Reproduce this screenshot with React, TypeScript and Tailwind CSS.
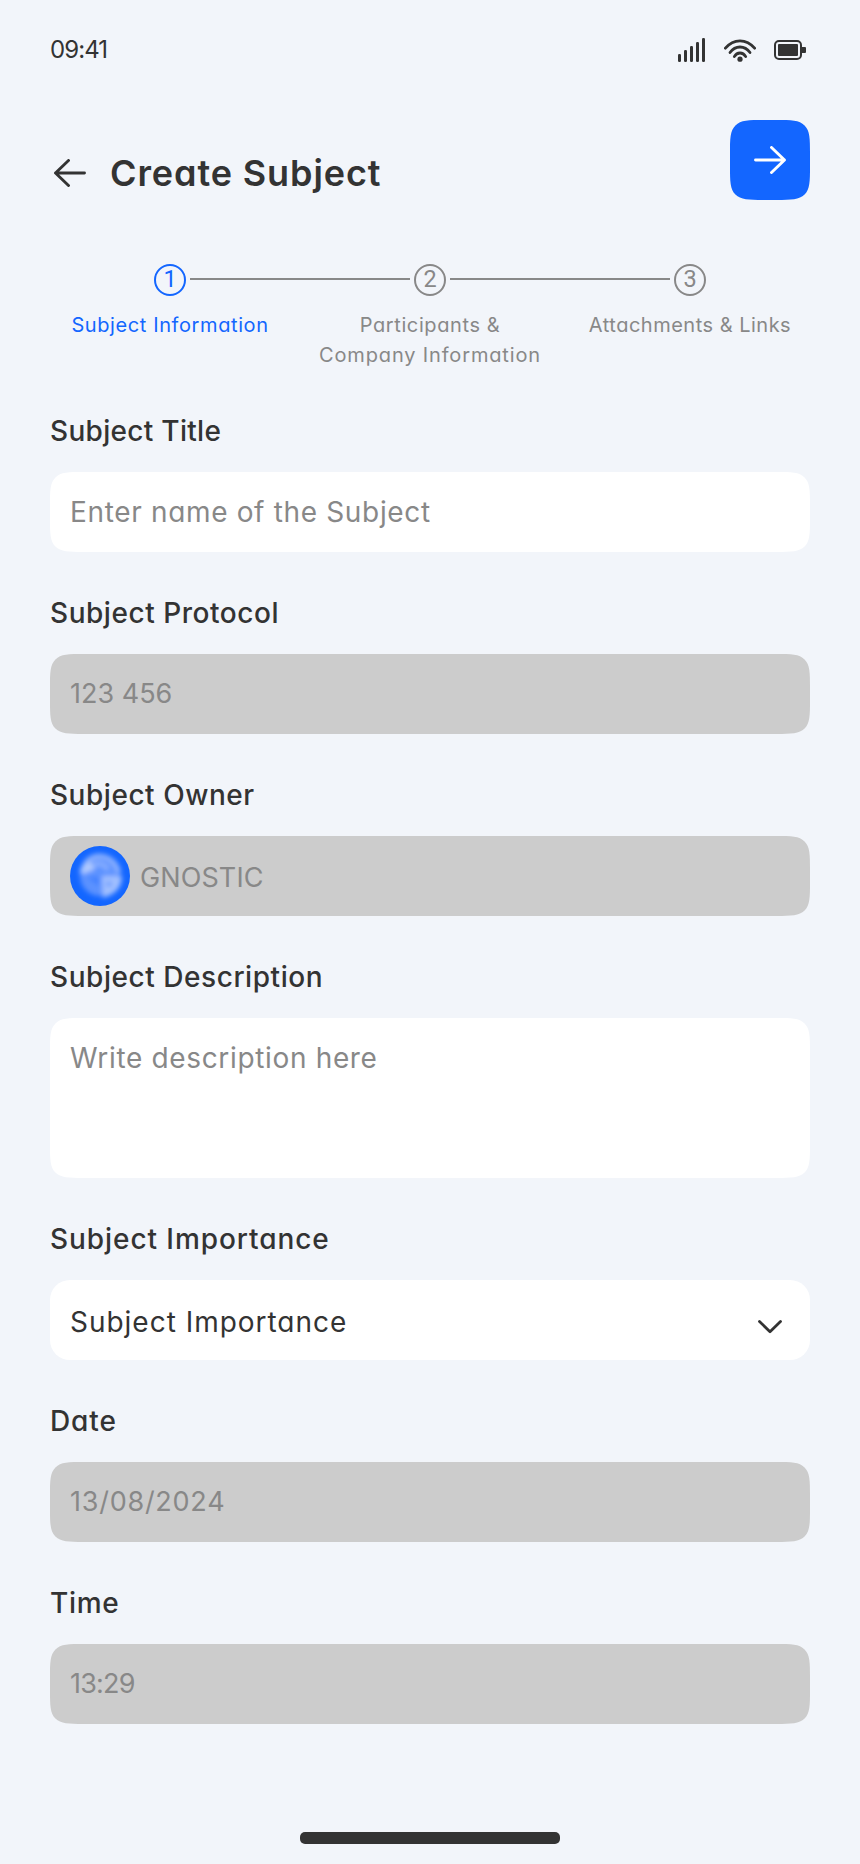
import type { ReactNode } from 'react';

function SignalIcon() {
  return (
    <svg width="28" height="24" viewBox="0 0 28 24" fill="#333333">
      <rect x="0" y="16" width="3" height="8" rx="1.2" />
      <rect x="6" y="12" width="3" height="12" rx="1.2" />
      <rect x="12" y="8" width="3" height="16" rx="1.2" />
      <rect x="18" y="4" width="3" height="20" rx="1.2" />
      <rect x="24" y="0" width="3" height="24" rx="1.2" />
    </svg>
  );
}

function WifiIcon() {
  return (
    <svg width="32" height="24" viewBox="0 0 32 24" fill="none" stroke="#333333" strokeWidth="2.8" strokeLinecap="round">
      <path d="M1.4 10.2C5.2 5.600 10.300 2.800 16 2.800s10.800 2.800 14.600 7.400" />
      <path d="M6 14.500c2.500-3.400 6-5.500 10-5.500s7.500 2.100 10 5.500" />
      <path d="M10.300 18.600c1.300-2.200 3.300-3.600 5.700-3.600s4.400 1.400 5.700 3.600" />
      <circle cx="16" cy="21.200" r="2.600" fill="#333333" stroke="none" />
    </svg>
  );
}

function BatteryIcon() {
  return (
    <svg width="32" height="20" viewBox="0 0 32 20">
      <rect x="1" y="1" width="26" height="18" rx="4" fill="none" stroke="#333333" strokeWidth="2" />
      <rect x="4" y="4" width="20" height="12" rx="1" fill="#333333" />
      <path d="M28 7h3a1 1 0 0 1 1 1v4a1 1 0 0 1-1 1h-3z" fill="#333333" />
    </svg>
  );
}

function ArrowIcon({ className }: { className: string }) {
  return (
    <svg width="32" height="28" viewBox="0 0 32 28" fill="none" stroke="currentColor" strokeWidth="2.900" strokeLinecap="round" strokeLinejoin="round" className={className}>
      <path d="M1.500 14H30.400M17.500 1.500 30.500 14 17.500 26.500" />
    </svg>
  );
}

function OwnerAvatar() {
  return (
    <svg width="60" height="60" viewBox="0 0 60 60" className="shrink-0">
      <defs>
        <filter id="soft" x="-30%" y="-30%" width="160%" height="160%">
          <feGaussianBlur stdDeviation="2.500" />
        </filter>
        <clipPath id="disc">
          <circle cx="30" cy="30" r="30" />
        </clipPath>
      </defs>
      <g clipPath="url(#disc)">
        <rect width="60" height="60" fill="#1366ff" />
        <g filter="url(#soft)">
          <circle cx="30" cy="30" r="20" fill="#5b92ff" />
          <path d="M13 24C17 5 44 5 49 27" fill="none" stroke="#8db2ff" strokeWidth="5" />
          <path d="M18 25c5-9 15-10 20-1" fill="none" stroke="#8db2ff" strokeWidth="4" />
          <path d="M9 25 19 15l6 8-12 5z" fill="#b0caff" />
          <path d="M17 31h12v9z" fill="#3f80ff" />
          <path d="M32 30h20c0 11-6 18-19 22z" fill="#a0bfff" />
          <circle cx="39" cy="38" r="2.500" fill="#5b92ff" />
        </g>
      </g>
    </svg>
  );
}

function Step({ number, active, children }: { number: number; active?: boolean; children: ReactNode }) {
  return (
    <div className={`flex w-[260px] flex-col items-center ${active ? 'text-[#1366ff]' : 'text-[#888888]'}`}>
      <span className="flex size-8 items-center justify-center rounded-full border-2 border-current font-['Roboto',sans-serif] text-[23.5px] leading-none">
        {number}
      </span>
      <span className="mt-3.5 text-center text-[20px] leading-[30px] whitespace-nowrap">{children}</span>
    </div>
  );
}

function Field({ label, labelClass, className, children }: { label: string; labelClass: string; className: string; children: ReactNode }) {
  return (
    <section className="flex flex-col gap-5">
      <h2 className={`pt-px text-[28px] leading-[42px] font-medium ${labelClass}`}>{label}</h2>
      <div className={`flex px-5 text-[28px] leading-[42px] ${className}`}>{children}</div>
    </section>
  );
}

export default function App() {
  return (
    <main className="flex h-[1864px] w-[860px] flex-col bg-[#f2f5fa] font-['Inter','Open_Sans',sans-serif] text-[#333333] [font-feature-settings:'cv11']">
      <header className="flex h-[100px] items-center justify-between pr-[54px] pl-[50px]">
        <span className="pb-px text-[24px] leading-9 tracking-[-0.9px]">09:41</span>
        <div className="flex items-center">
          <SignalIcon />
          <span className="ml-[18px] pb-px"><WifiIcon /></span>
          <span className="ml-[18px]"><BatteryIcon /></span>
        </div>
      </header>

      <div className="mt-5 flex h-20 justify-between pr-[50px] pl-[54px]">
        <div className="flex items-center gap-6 pt-[26px]">
          <ArrowIcon className="rotate-180" />
          <h1 className="text-[36px] leading-[54px] font-semibold tracking-[0.9px]">Create Subject</h1>
        </div>
        <button className="flex size-20 items-center justify-center rounded-[34px] bg-[#1366ff] text-white [corner-shape:squircle]">
          <ArrowIcon className="" />
        </button>
      </div>

      <nav className="relative mx-10 mt-16 flex h-[106px]">
        <Step number={1} active><span className="tracking-[0.6px]">Subject Information</span></Step>
        <Step number={2}>
          <span className="tracking-[0.6px]">Participants &amp;</span>
          <br />
          <span className="tracking-[0.85px]">Company Information</span>
        </Step>
        <Step number={3}><span className="tracking-[0.5px]">Attachments &amp; Links</span></Step>
        <span className="absolute top-3.5 left-[150px] h-0.5 w-[220px] bg-[#888888]" />
        <span className="absolute top-3.5 left-[410px] h-0.5 w-[220px] bg-[#888888]" />
      </nav>

      <div className="mt-[39px] flex flex-col gap-[39px] px-[50px]">
        <Field label="Subject Title" labelClass="tracking-[0.3px]" className="h-20 items-center rounded-[34px] bg-white pb-px text-[#888888] [corner-shape:squircle]">
          <span className="tracking-[0.66px]">Enter name of the Subject</span>
        </Field>
        <Field label="Subject Protocol" labelClass="tracking-[0.54px]" className="h-20 items-center rounded-[34px] bg-[#cccccc] text-[#888888] [corner-shape:squircle]">
          <span className="text-[27px]">123 456</span>
        </Field>
        <Field label="Subject Owner" labelClass="tracking-[0.53px]" className="h-20 items-center gap-2.5 rounded-[34px] bg-[#cccccc] text-[#888888] [corner-shape:squircle]">
          <OwnerAvatar />
          <span className="pt-1 text-[27px] tracking-[0.1px]">GNOSTIC</span>
        </Field>
        <Field label="Subject Description" labelClass="tracking-[0.55px]" className="h-40 items-start rounded-[34px] bg-white pt-[19px] text-[#888888] [corner-shape:squircle]">
          <span className="tracking-[0.66px]">Write description here</span>
        </Field>
        <Field label="Subject Importance" labelClass="tracking-[0.93px]" className="h-20 items-center justify-between rounded-[20px] bg-white">
          <span className="pt-[3px] tracking-[0.98px]">Subject Importance</span>
          <svg width="24" height="14" viewBox="0 0 24 14" fill="none" stroke="#333333" strokeWidth="2.800" strokeLinecap="round" strokeLinejoin="round" className="mt-[13px] mr-2">
            <path d="M1.500 1.500 12 11.700 22.500 1.500" />
          </svg>
        </Field>
        <Field label="Date" labelClass="tracking-[0.9px]" className="h-20 items-center rounded-[34px] bg-[#cccccc] text-[#888888] [corner-shape:squircle]">
          <span className="text-[27px] tracking-[0.75px]">13/08/2024</span>
        </Field>
        <Field label="Time" labelClass="tracking-[0.7px]" className="h-20 items-center rounded-[34px] bg-[#cccccc] text-[#888888] [corner-shape:squircle]">
          <span className="text-[27px] tracking-[-0.8px]">13:29</span>
        </Field>
      </div>

      <footer className="mt-auto flex justify-center pb-5">
        <span className="h-3 w-[260px] rounded-[5px] bg-[#333333]" />
      </footer>
    </main>
  );
}
